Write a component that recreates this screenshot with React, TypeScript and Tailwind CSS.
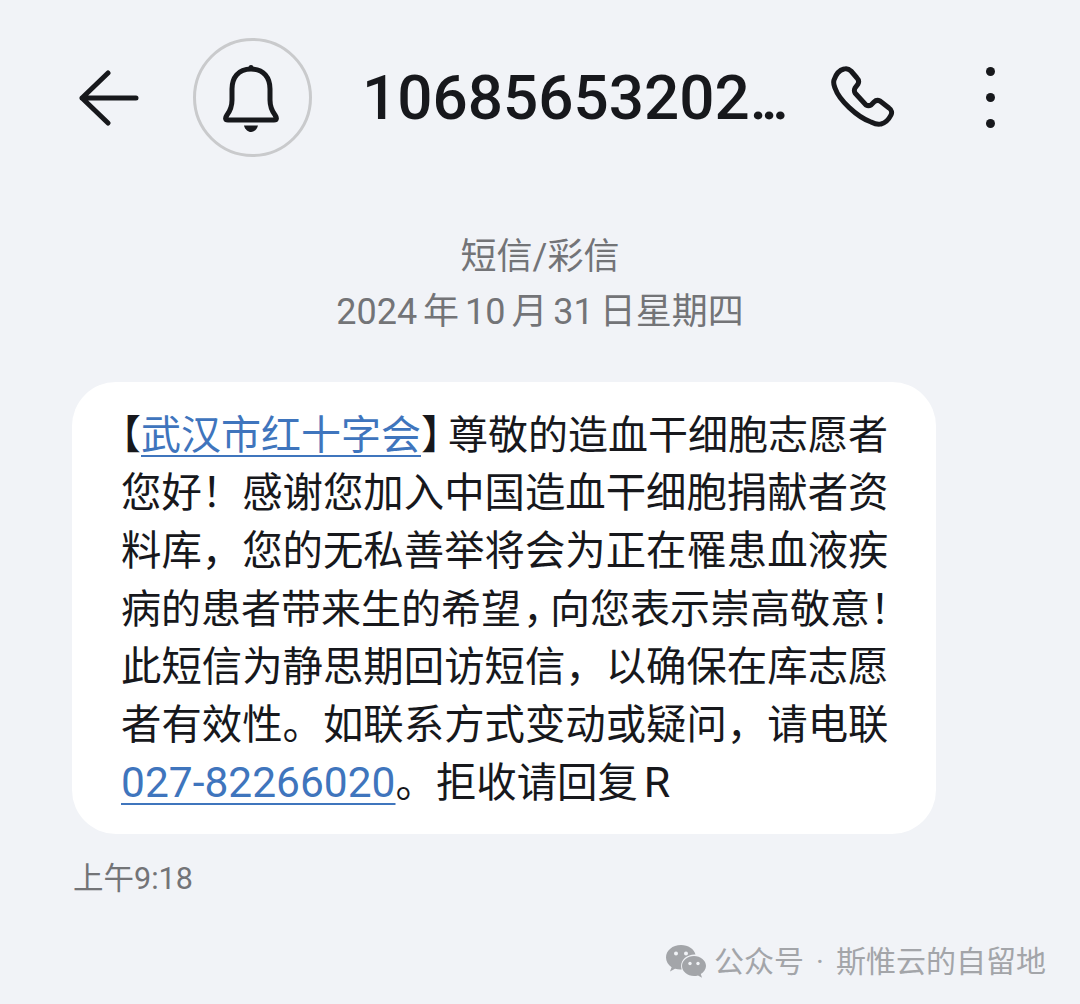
const cjk = "font-['Roboto','Noto_Sans_CJK_SC',sans-serif]";

function BackIcon() {
  return (
    <svg width="60" height="58" viewBox="0 0 60 58" fill="none" stroke="#17181c" strokeWidth="5" strokeLinecap="round" strokeLinejoin="round">
      <path d="M57 29H3M29 4 3 29l26 25" />
    </svg>
  );
}

function BellIcon() {
  return (
    <svg width="58" height="70" viewBox="0 0 58 70" fill="none" stroke="#17181c" strokeWidth="5" strokeLinejoin="round">
      <path d="M29 6C16 6 10 15 10 26v11c0 7-2 11-5 15-2 3-2 5 1 5h46c3 0 3-2 1-5-3-4-5-8-5-15V26C48 15 42 6 29 6Z" />
      <circle cx="29" cy="4.5" r="2.5" fill="#17181c" stroke="none" />
      <path d="M22 62.5h14c-1 4-4 6.500-7 6.500s-6-2.500-7-6.500Z" fill="#17181c" stroke="none" />
    </svg>
  );
}

function PhoneIcon() {
  return (
    <svg width="66" height="66" viewBox="0 0 66 66" fill="none" stroke="#17181c" strokeWidth="5" strokeLinejoin="round">
      <path d="M4 15c2-6 6-10 10-11 3-1 5 0 7 2l6 7c2 2 2 4 1 6l-3 4c-1 2-1 3 0 5l11 12c2 1 3 1 5 0l3-3c2-2 4-2 6-1l9 7c3 2 3 5 2 7-2 4-6 8-10 9-3 1-6 0-10-2C27 52 9 35 5 23c-1-3-2-5-1-8Z" />
    </svg>
  );
}

function WechatIcon() {
  return (
    <svg width="42" height="36" viewBox="0 0 42 36">
      <path d="M16 1C7.500 1 1 6.500 1 13.500c0 4 2.200 7.300 5.600 9.700L5 27.500l5-2.700c1.800.5 3.600.8 5.500.8h1.200a11 11 0 0 1-.6-3.600c0-6.500 6-11.500 13.400-11.500h1C29.200 5 23.200 1 16 1Z" fill="#a3a5a9" />
      <path d="M41 22c0-5.500-5.500-10-12-10s-12 4.500-12 10 5.500 10 12 10c1.400 0 2.700-.2 4-.6l4 2.300-1.200-3.600C38.800 28 41 25.200 41 22Z" fill="#a3a5a9" />
      <circle cx="11" cy="9.500" r="2" fill="#f1f3f7" />
      <circle cx="21" cy="9.500" r="2" fill="#f1f3f7" />
      <circle cx="25" cy="19.500" r="1.700" fill="#f1f3f7" />
      <circle cx="33" cy="19.500" r="1.700" fill="#f1f3f7" />
    </svg>
  );
}

export default function App() {
  return (
    <div className={`${cjk} flex h-[1004px] w-[1080px] flex-col overflow-hidden bg-[#f1f3f7]`}>
      <header className="flex items-center pl-[79px] pt-[38px]">
        <BackIcon />
        <div className="ml-[54px] flex h-[119px] w-[119px] items-center justify-center rounded-full border-[3px] border-[#c9cacc] pr-[4px]">
          <BellIcon />
        </div>
        <h1 className="ml-[50px] w-[420px] whitespace-nowrap text-[62px] leading-[70px] font-medium text-[#17181c]">
          10685653202<span className="tracking-[-6px]">...</span>
        </h1>
        <div className="ml-[48px]">
          <PhoneIcon />
        </div>
        <div className="ml-[90px] flex flex-col gap-[17px]">
          <span className="h-[9px] w-[9px] rounded-full bg-[#17181c]" />
          <span className="h-[9px] w-[9px] rounded-full bg-[#17181c]" />
          <span className="h-[9px] w-[9px] rounded-full bg-[#17181c]" />
        </div>
      </header>

      <div className="mt-[73px] flex flex-col items-center text-[36px] leading-[55px] text-[#737477]">
        <span>短信/彩信</span>
        <span className="[word-spacing:-3px]">2024 年 10 月 31 日星期四</span>
      </div>

      <div className="ml-[72px] mt-[42px] w-[864px] rounded-[44px] bg-white pl-[49px] pt-[25px] pb-[21px] text-[40.4px] leading-[58px] whitespace-nowrap text-[#17181c]">
        <div className="-ml-[20px] text-[40px]">
          【<span className="text-[#3f75bd] underline underline-offset-[6px] decoration-2">武汉市红十字会</span><span className="mr-[7px] [font-feature-settings:'halt']">】</span>尊敬的造血干细胞志愿者
        </div>
        <div>您好！感谢您加入中国造血干细胞捐献者资</div>
        <div>料库，您的无私善举将会为正在罹患血液疾</div>
        <div className="text-[40px]">
          病的患者带来生的希望<span className="ml-[2px] mr-[7px] [font-feature-settings:'halt']">，</span>向您表示崇高敬意！
        </div>
        <div>此短信为静思期回访短信，以确保在库志愿</div>
        <div>者有效性。如联系方式变动或疑问，请电联</div>
        <div>
          <span className="text-[42.500px] leading-none text-[#3f75bd] underline underline-offset-[6px] decoration-2">027-82266020</span>。拒收请回复<span className="ml-[6px] text-[43px] leading-none">R</span>
        </div>
      </div>

      <div className="ml-[73px] mt-[24px] text-[30.500px] leading-[42px] text-[#737477]">上午9:18</div>

      <div className="mt-[44px] mr-[34px] flex items-center justify-end text-[30px] leading-[36px] text-[#a3a5a9]">
        <WechatIcon />
        <span className="ml-[7px]">公众号</span>
        <span className="w-[32px] text-center">·</span>
        <span>斯惟云的自留地</span>
      </div>
    </div>
  );
}
